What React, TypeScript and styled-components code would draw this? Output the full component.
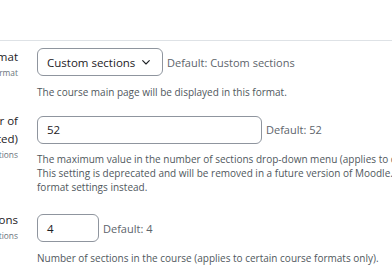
import { createGlobalStyle, styled } from 'styled-components';

const GlobalStyle = createGlobalStyle`
  html, body {
    margin: 0;
    padding: 0;
    background: #fff;
    overflow: hidden;
  }
  body {
    font-family: "Open Sans", "Liberation Sans", sans-serif;
    color: #1d2125;
  }
`;

const Page = styled.div`
  width: 392px;
  height: 272px;
  overflow: hidden;
`;

const Header = styled.div`
  height: 40px;
  border-bottom: 1px solid #dee2e6;
`;

const Settings = styled.div`
  padding-top: 7px;
  margin-left: -142px;
`;

const Row = styled.div<{ $after: number }>`
  display: grid;
  grid-template-columns: 160px auto;
  column-gap: 19px;
  align-items: start;
  margin-bottom: ${(p) => p.$after}px;
`;

const Label = styled.div<{ $shift: number }>`
  text-align: right;
  margin-top: ${(p) => p.$shift}px;
  white-space: nowrap;
`;

const Title = styled.div`
  font-size: 11.5px;
  line-height: 18px;
`;

const Key = styled.div`
  font-size: 8.4px;
  line-height: 13px;
  color: #6a737b;
`;

const Field = styled.div`
  display: flex;
  flex-direction: column;
`;

const Control = styled.div`
  display: flex;
  align-items: center;
  gap: 4px;
`;

const Box = styled.div<{ $width: number }>`
  box-sizing: border-box;
  width: ${(p) => p.$width}px;
  height: 28px;
  border: 1px solid #8f959e;
  border-radius: 6px;
  padding: 0 9px;
  display: flex;
  align-items: center;
  justify-content: space-between;
  font-size: 11.5px;
  color: #1d2125;
`;

const Chevron = styled.svg`
  width: 8px;
  height: 5px;
  margin-right: 3px;
`;

const DefaultInfo = styled.span`
  font-size: 11px;
  color: #5d646b;
  white-space: nowrap;
`;

const Description = styled.div`
  margin-top: 8.5px;
  font-size: 10px;
  line-height: 14px;
  color: #50575d;
  white-space: nowrap;
`;

export default function App() {
  return (
    <Page>
      <GlobalStyle />
      <Header />
      <Settings>
        <Row $after={17}>
          <Label $shift={0}>
            <Title>Course format</Title>
            <Key>moodlecourse | format</Key>
          </Label>
          <Field>
            <Control>
              <Box $width={126}>
                <span>Custom sections</span>
                <Chevron viewBox="0 0 8 5">
                  <polyline
                    points="0.7,0.7 4,4 7.3,0.7"
                    fill="none"
                    stroke="#1d2125"
                    strokeWidth="1.1"
                    strokeLinecap="round"
                    strokeLinejoin="round"
                  />
                </Chevron>
              </Box>
              <DefaultInfo>Default: Custom sections</DefaultInfo>
            </Control>
            <Description>The course main page will be displayed in this format.</Description>
          </Field>
        </Row>

        <Row $after={20}>
          <Label $shift={-4}>
            <Title>Maximum number of</Title>
            <Title>sections (Deprecated)</Title>
            <Key>moodlecourse | maxsections</Key>
          </Label>
          <Field>
            <Control>
              <Box $width={225}>52</Box>
              <DefaultInfo>Default: 52</DefaultInfo>
            </Control>
            <Description>
              The maximum value in the number of sections drop-down menu (applies to certain course formats only).
              <br />
              This setting is deprecated and will be removed in a future version of Moodle. Use the course
              <br />
              format settings instead.
            </Description>
          </Field>
        </Row>

        <Row $after={0}>
          <Label $shift={-3}>
            <Title>Number of sections</Title>
            <Key>moodlecourse | numsections</Key>
          </Label>
          <Field>
            <Control>
              <Box $width={62}>4</Box>
              <DefaultInfo>Default: 4</DefaultInfo>
            </Control>
            <Description>Number of sections in the course (applies to certain course formats only).</Description>
          </Field>
        </Row>
      </Settings>
    </Page>
  );
}
